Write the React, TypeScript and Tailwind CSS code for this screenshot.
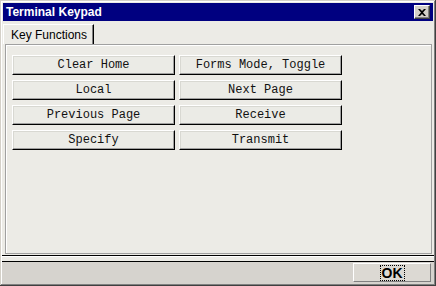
import React from "react";

const keys = [
  "Clear Home",
  "Forms Mode, Toggle",
  "Local",
  "Next Page",
  "Previous Page",
  "Receive",
  "Specify",
  "Transmit",
];

function KeyButton({ label }: { label: string }) {
  return (
    <button
      className="
      h-[20px] w-[163px] flex items-center justify-center
      bg-[#ebebe6] text-[#111111] text-[12px] leading-none
      border-t border-l border-[#ffffff] border-r border-b border-r-[#000000] border-b-[#000000]
      shadow-[inset_-1px_-1px_#a0a0a0,inset_1px_1px_#d8d8d2]
    "
      style={{ fontFamily: '"Liberation Mono", "Courier New", monospace' }}
    >
      {label}
    </button>
  );
}

export default function App() {
  return (
    <div
      className="
      w-[436px] h-[286px] flex flex-col bg-[#ecebe6]
      shadow-[inset_-1px_-1px_#404040,inset_1px_1px_#d4d0c8,inset_-2px_-2px_#808080,inset_2px_2px_#ffffff]
    "
      style={{ fontFamily: '"Liberation Sans", Arial, sans-serif' }}
    >
      {/* Title bar */}
      <div className="mx-[3px] mt-[3px] h-[18px] bg-[#000080] flex items-center justify-between pl-[3px] pr-[3px]">
        <span className="text-white font-bold text-[12px] leading-none">Terminal Keypad</span>
        <div className="w-[16px] h-[14px] bg-[#d4d0c8] border-t border-l border-white border-r border-b border-r-[#404040] border-b-[#404040] shadow-[inset_-1px_-1px_#808080] flex items-center justify-center">
          <svg width="8" height="7" viewBox="0 0 8 7">
            <path d="M0 0h2l2 2 2-2h2L5 3.5 8 7H6L4 5 2 7H0l3-3.5z" fill="#000" />
          </svg>
        </div>
      </div>

      {/* Tab strip */}
      <div className="flex pl-[3px] pt-[3px] h-[23px]">
        <div className="h-[20px] w-[91px] flex items-center pl-[7px] border-t border-l border-white border-r border-r-[#000000] shadow-[inset_-1px_0_#808080] text-[12px] text-black">
          Key Functions
        </div>
      </div>

      {/* Panel */}
      <div className="ml-[5px] mr-[4px] h-[210px] border border-[#a0a0a0] shadow-[inset_1px_1px_#ffffff] pl-[6px] pt-[10px]">
        <div className="grid grid-cols-[163px_163px] gap-x-[4px] gap-y-[5px]">
          {keys.map((k) => (
            <KeyButton key={k} label={k} />
          ))}
        </div>
      </div>

      {/* Separator */}
      <div className="mx-[2px] mt-[1px] h-[7px] border-t border-b border-black bg-[#ecebe6] shadow-[inset_0_1px_#ffffff]" />

      {/* Footer */}
      <div className="flex-1 mx-[2px] mb-[2px] bg-[#d6d3ce] flex justify-end items-start pt-[1px] pr-[3px]">
        <button className="w-[78px] h-[19px] bg-[#dcd9d3] border-t border-l border-white border-r border-b border-r-[#808080] border-b-[#808080] flex items-center justify-center">
          <span className="font-bold text-[14px] leading-none text-black px-[1px] outline outline-1 outline-dotted outline-black">
            OK
          </span>
        </button>
      </div>
    </div>
  );
}
